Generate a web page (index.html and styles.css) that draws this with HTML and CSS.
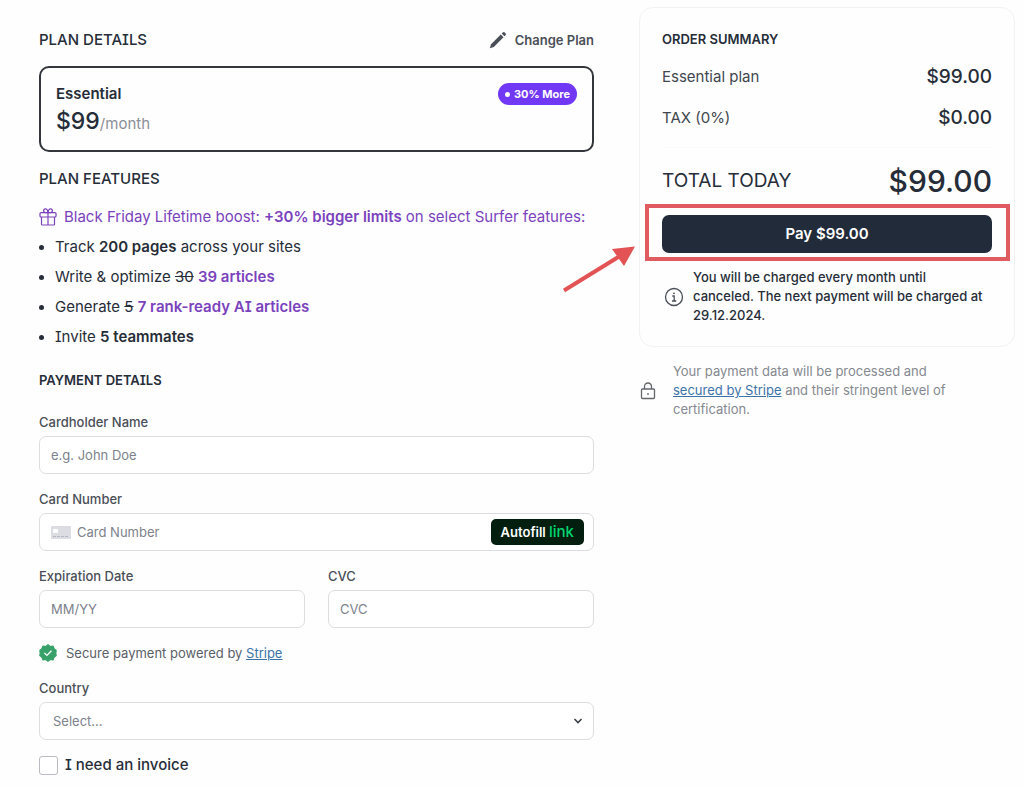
FILE: index.html
```html
<!DOCTYPE html>
<html lang="en">
<head>
    <meta charset="UTF-8">
    <meta name="viewport" content="width=device-width, initial-scale=1.0">
    <title>Checkout</title>
    <link rel="stylesheet" href="styles.css">
</head>
<body>
    <div class="checkout">
        <main class="details">
            <div class="section-head">
                <h2>PLAN DETAILS</h2>
                <button type="button" class="change-plan">
                    <svg width="18" height="18" viewBox="0 0 18 18" fill="currentColor" aria-hidden="true">
                        <path d="M.8 17.2l1.3-4L11.8 3.5l2.7 2.7-9.7 9.7z"/>
                        <path d="M12.7 2.6l1.1-1.1a1.4 1.4 0 0 1 2 0l.7.7a1.4 1.4 0 0 1 0 2l-1.1 1.1z"/>
                    </svg>
                    Change Plan
                </button>
            </div>

            <div class="plan-box">
                <div>
                    <div class="plan-name">Essential</div>
                    <div class="plan-price">$99<span>/month</span></div>
                </div>
                <span class="badge">30% More</span>
            </div>

            <h2 class="features-title">PLAN FEATURES</h2>
            <p class="boost">
                <svg width="18" height="18" viewBox="0 0 18 18" fill="none" stroke="currentColor" stroke-width="1.2" stroke-linejoin="round" aria-hidden="true">
                    <rect x="1" y="4.6" width="16" height="4.4" rx="1"/>
                    <path d="M2.5 9v7.2a.8.8 0 0 0 .8.8h11.4a.8.8 0 0 0 .8-.8V9M9 4.6V17"/>
                    <path d="M9 4.6H6.4a1.9 1.9 0 1 1 1.9-2.5zM9 4.6h2.6a1.9 1.9 0 1 0-1.9-2.5z"/>
                </svg>
                <span>Black Friday Lifetime boost: <b>+30% bigger limits</b> on select Surfer features:</span>
            </p>
            <ul class="features">
                <li>Track <b>200 pages</b> across your sites</li>
                <li>Write &amp; optimize <s>30</s> <b class="purple">39 articles</b></li>
                <li>Generate <s>5</s> <b class="purple">7 rank-ready AI articles</b></li>
                <li>Invite <b>5 teammates</b></li>
            </ul>

            <h2 class="payment-title">PAYMENT DETAILS</h2>
            <form class="payment-form">
                <div class="field">
                    <label for="name">Cardholder Name</label>
                    <input type="text" id="name" placeholder="e.g. John Doe">
                </div>
                <div class="field">
                    <label for="card">Card Number</label>
                    <div class="card-input">
                        <svg width="20" height="13" viewBox="0 0 20 13" aria-hidden="true">
                            <rect width="20" height="13" rx="1" fill="#dcdde2"/>
                            <rect x="2" y="3" width="5" height="4" rx="1" fill="#fff"/>
                            <path d="M2 10.5h16" stroke="#b5b8c0" stroke-dasharray="3 1"/>
                        </svg>
                        <input type="text" id="card" placeholder="Card Number">
                        <button type="button" class="autofill">Autofill <span>link</span></button>
                    </div>
                </div>
                <div class="field-row">
                    <div class="field">
                        <label for="expiry">Expiration Date</label>
                        <input type="text" id="expiry" placeholder="MM/YY">
                    </div>
                    <div class="field">
                        <label for="cvc">CVC</label>
                        <input type="text" id="cvc" placeholder="CVC">
                    </div>
                </div>
                <p class="secure">
                    <svg width="18" height="18" viewBox="0 0 18 18" aria-hidden="true">
                        <path d="M9 .8l2.2 1.7 2.8-.4 1.1 2.6 2.1 1.7L16.8 9l.4 2.6-2.1 1.7-1.1 2.6-2.8-.4L9 17.2l-2.2-1.7-2.8.4-1.1-2.6-2.1-1.7L1.2 9 .8 6.4l2.1-1.7L4 2.1l2.8.4z" fill="#38a169" stroke="#38a169" stroke-width="1.2" stroke-linejoin="round"/>
                        <path d="M5.4 9.1l2.5 2.3 4.6-4.6" fill="none" stroke="#fff" stroke-width="1.3"/>
                    </svg>
                    <span>Secure payment powered by <a href="#">Stripe</a></span>
                </p>
                <div class="field">
                    <label for="country">Country</label>
                    <div class="select-wrap">
                        <select id="country">
                            <option>Select...</option>
                        </select>
                        <svg width="10" height="8" viewBox="0 0 10 8" fill="none" stroke="#3c4048" stroke-width="1.6" aria-hidden="true">
                            <path d="M1.5 2L5 5.5 8.5 2"/>
                        </svg>
                    </div>
                </div>
                <label class="invoice"><input type="checkbox"> I need an invoice</label>
            </form>
        </main>

        <aside class="side">
            <div class="summary">
                <h2>ORDER SUMMARY</h2>
                <div class="line"><span>Essential plan</span><span class="amount">$99.00</span></div>
                <div class="line"><span>TAX (0%)</span><span class="amount">$0.00</span></div>
                <div class="total"><span>TOTAL TODAY</span><span class="total-amount">$99.00</span></div>
                <div class="pay-wrap">
                    <button type="button" class="pay">Pay $99.00</button>
                    <svg class="arrow" width="80" height="56" viewBox="0 0 80 56" aria-hidden="true">
                        <path d="M4 50.5L60 16" stroke="#e35254" stroke-width="4"/>
                        <path d="M75 6.5L52 9l12 17z" fill="#e35254"/>
                    </svg>
                </div>
                <div class="notice">
                    <svg width="20" height="20" viewBox="0 0 20 20" fill="none" stroke="#4a4f57" stroke-width="1.3" aria-hidden="true">
                        <circle cx="10" cy="10" r="8.5"/>
                        <path d="M8.3 9h1.9v5M8 14h4.2"/>
                        <circle cx="10" cy="6.3" r=".9" fill="#4a4f57" stroke="none"/>
                    </svg>
                    <p>You will be charged every month until canceled. The next payment will be charged at 29.12.2024.</p>
                </div>
            </div>
            <div class="stripe-note">
                <svg width="18" height="18" viewBox="0 0 18 18" fill="none" stroke="#62666d" stroke-width="1.3" aria-hidden="true">
                    <rect x="2.5" y="7" width="13" height="9.5" rx="1"/>
                    <path d="M5.5 7V4.5a3.5 3.5 0 0 1 7 0V7"/>
                    <circle cx="9" cy="12" r=".9" fill="#62666d" stroke="none"/>
                </svg>
                <p>Your payment data will be processed and <a href="#">secured by Stripe</a> and their stringent level of certification.</p>
            </div>
        </aside>
    </div>
</body>
</html>
```
FILE: styles.css
```css
* {
    box-sizing: border-box;
}
body {
    margin: 0;
    background-color: #fefefe;
    color: #262d38;
    font-family: Inter, "Liberation Sans", sans-serif;
    font-size: 13px;
    line-height: 20px;
    font-feature-settings: "cv08";
}
h2, p, ul {
    margin: 0;
    padding: 0;
}
h2 {
    font-size: 15px;
    line-height: 20px;
    font-weight: 500;
}
b {
    font-weight: 600;
}
a {
    color: #3d73a8;
}
button, input, select {
    font: inherit;
    font-feature-settings: inherit;
}
button {
    border: none;
    cursor: pointer;
}
.checkout {
    display: grid;
    grid-template-columns: 555fr 376fr;
    gap: 45px;
    align-items: start;
    padding: 0 9px 0 39px;
}
.details {
    padding-top: 30px;
}

/* Plan */
.section-head {
    display: flex;
    justify-content: space-between;
    align-items: center;
    height: 20px;
}
.change-plan {
    display: flex;
    align-items: center;
    gap: 8px;
    padding: 0;
    background: none;
    color: #4a4f57;
    font-weight: 600;
}
.plan-box {
    display: flex;
    justify-content: space-between;
    align-items: flex-start;
    margin-top: 16px;
    padding: 15px 15px 12px;
    border: 2px solid #33363b;
    border-radius: 10px;
}
.plan-name {
    font-size: 15px;
    line-height: 22px;
    font-weight: 600;
}
.plan-price {
    font-size: 23px;
    line-height: 33px;
    font-weight: 500;
}
.plan-price span {
    color: #8b8f98;
    font-size: 15px;
    line-height: 20px;
    font-weight: 400;
}
.badge {
    display: flex;
    align-items: center;
    gap: 4px;
    padding: 0 7px;
    border-radius: 11px;
    background-color: #7138f5;
    color: #fff;
    font-size: 11px;
    line-height: 22px;
    font-weight: 700;
}
.badge::before {
    content: "";
    width: 5px;
    height: 5px;
    border-radius: 50%;
    background-color: #fff;
}
.features-title {
    margin-top: 17px;
}
.boost {
    display: flex;
    align-items: center;
    gap: 7px;
    margin-top: 13px;
    color: #7a42bd;
    font-size: 15px;
    line-height: 30px;
}
.purple {
    color: #7a42bd;
}
.features {
    list-style: none;
    font-size: 15px;
    line-height: 30px;
}
.features li::before {
    content: "";
    display: inline-block;
    width: 5px;
    height: 5px;
    margin-right: 11px;
    border-radius: 50%;
    background-color: #262d38;
    vertical-align: middle;
}

/* Payment form */
.payment-title {
    margin-top: 18px;
    font-size: 13px;
    font-weight: 600;
}
.payment-form {
    display: flex;
    flex-direction: column;
    gap: 15px;
    margin-top: 22px;
}
.field {
    display: flex;
    flex-direction: column;
    gap: 4px;
}
.field label {
    color: #4a4f57;
    font-weight: 500;
}
.field > input, .card-input, .select-wrap select {
    width: 100%;
    height: 38px;
    padding: 0 11px;
    border: 1px solid #dcdde0;
    border-radius: 7px;
    background-color: #fff;
}
.field-row {
    display: grid;
    grid-template-columns: 1fr 1fr;
    gap: 23px;
}
::placeholder {
    color: #7d828b;
    opacity: 1;
}
.card-input {
    display: flex;
    align-items: center;
    gap: 6px;
    padding-right: 9px;
}
.card-input input {
    flex: 1;
    min-width: 0;
    padding: 0;
    border: none;
    background: none;
}
.autofill {
    padding: 0 10px;
    border-radius: 5px;
    background-color: #011e0f;
    color: #fff;
    line-height: 25px;
    font-weight: 600;
}
.autofill span {
    color: #00d66f;
    font-size: 15px;
    font-weight: 500;
}
.secure {
    display: flex;
    align-items: center;
    gap: 9px;
    color: #5a5f68;
}
.select-wrap {
    display: grid;
    align-items: center;
}
.select-wrap select, .select-wrap svg {
    grid-area: 1 / 1;
}
.select-wrap select {
    appearance: none;
    padding: 0 13px;
    color: #7d828b;
}
.select-wrap svg {
    justify-self: end;
    margin-right: 11px;
    pointer-events: none;
}
.invoice {
    display: flex;
    align-items: center;
    gap: 7px;
    font-size: 15px;
    font-weight: 500;
}
.invoice input {
    appearance: none;
    width: 19px;
    height: 19px;
    margin: 0;
    border: 1px solid #b9bbc0;
    border-radius: 3px;
    background-color: #fff;
}

/* Order summary */
.side {
    padding-top: 7px;
}
.summary {
    padding: 21px 22px;
    border: 1px solid #f2f2f3;
    border-radius: 14px;
}
.summary h2 {
    font-size: 13px;
    font-weight: 600;
}
.line, .total {
    display: flex;
    justify-content: space-between;
    align-items: center;
}
.line {
    margin-top: 13px;
    font-size: 15px;
    line-height: 28px;
}
.summary h2 + .line {
    margin-top: 14px;
}
.line span:first-child {
    color: #41464f;
}
.line .amount {
    font-size: 19px;
    font-weight: 500;
}
.total {
    margin-top: 15px;
    padding: 14px 0 15px;
    border-top: 1px solid #fafafb;
    font-size: 19px;
    line-height: 38px;
}
.total-amount {
    font-size: 30px;
    font-weight: 500;
}
.pay-wrap {
    position: relative;
}
.pay {
    display: block;
    width: 100%;
    height: 38px;
    border-radius: 7px;
    background-color: #222b39;
    color: #fff;
    font-size: 15px;
    font-weight: 600;
}
/* Red frame and arrow around the pay button */
.pay-wrap::after {
    content: "";
    position: absolute;
    inset: -11px -18px -8px -17px;
    border: 4px solid #e05c60;
    pointer-events: none;
}
.arrow {
    position: absolute;
    top: 25px;
    left: -102px;
}
.notice, .stripe-note {
    display: flex;
    align-items: center;
    line-height: 19px;
}
.notice {
    gap: 9px;
    margin-top: 15px;
    padding: 0 4px 0 2px;
    font-weight: 500;
}
.notice svg, .stripe-note svg {
    flex-shrink: 0;
}
.stripe-note {
    gap: 16px;
    margin-top: 15px;
    padding-right: 40px;
    color: #858991;
}
```
